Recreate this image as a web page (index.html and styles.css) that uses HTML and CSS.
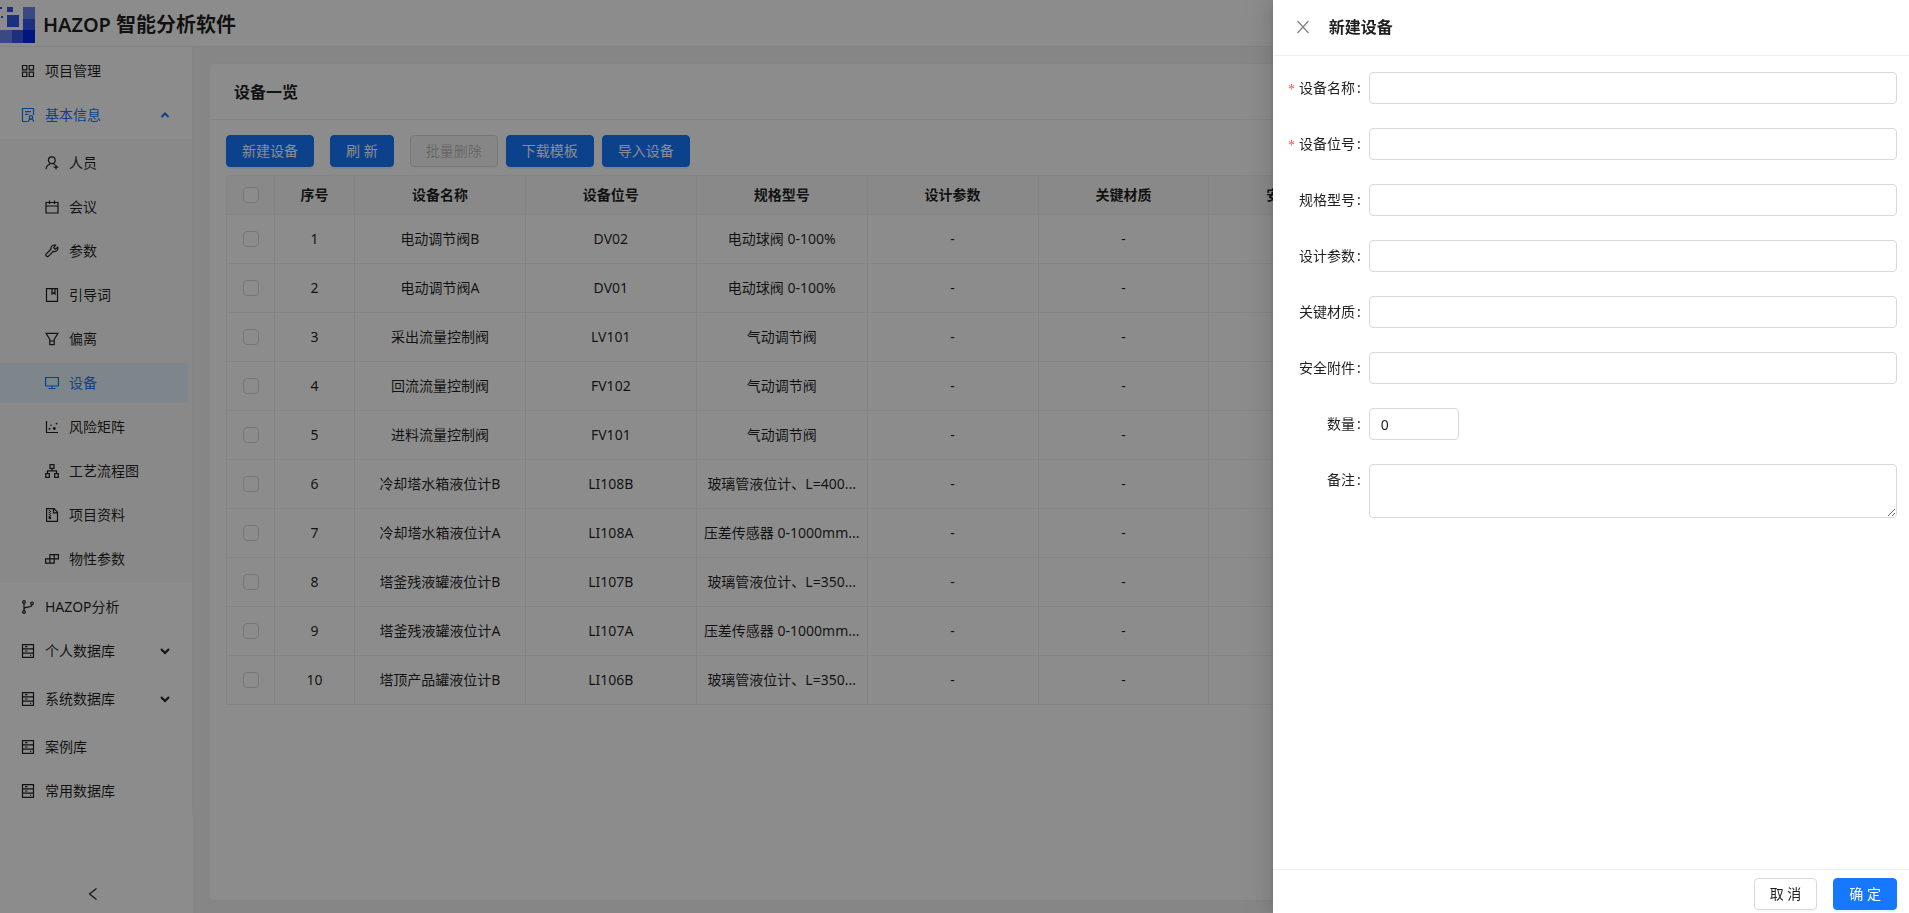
FILE: index.html
```html
<!DOCTYPE html>
<html lang="zh-CN">
<head>
    <meta charset="UTF-8">
    <title>HAZOP 智能分析软件</title>
    <link rel="stylesheet" href="styles.css">
</head>
<body>
    <!-- icon sprite -->
    <svg class="sprite" xmlns="http://www.w3.org/2000/svg">
        <symbol id="i-app" viewBox="0 0 14 14"><path d="M1.500 1.500h4.300v4.300h-4.300zM8.200 1.500h4.300v4.300h-4.300zM1.500 8.200h4.300v4.300h-4.300zM8.200 8.200h4.300v4.300h-4.300z"/></symbol>
        <symbol id="i-audit" viewBox="0 0 14 14"><path d="M6.500 13.500h-5v-13h11v6.500M4 3.700h6M4 6.300h3.500"/><circle cx="10" cy="9.300" r="1.700"/><path d="M7.400 13.800c.2-1.800 1.200-2.800 2.600-2.800s2.400 1 2.600 2.800"/></symbol>
        <symbol id="i-user" viewBox="0 0 14 14"><circle cx="6.800" cy="4.200" r="3.400"/><path d="M1 13.300c.2-2.600 1.800-4.600 4.200-5.300M8.300 8c.8.2 1.400.5 2 1M8.700 11.200h4.600M11 9v4.500"/></symbol>
        <symbol id="i-cal" viewBox="0 0 14 14"><path d="M1 2.500h12v10.500h-12zM1 6h12M4.500.5v3.500M9.500.5v3.500"/></symbol>
        <symbol id="i-tool" viewBox="0 0 14 14"><path d="M12.700 3.300l-2.500 2-1.500-1.500 1.900-2.600c-2.700-.8-5.200 1.200-4.600 4l-5 5c-.8.9.9 3 2.200 2.200l5-5c2.900.7 5.400-1.500 4.500-4.100z"/></symbol>
        <symbol id="i-book" viewBox="0 0 14 14"><path d="M1.500.7h11v12.600h-11zM7 .7v5.300l1.500-1.300 1.500 1.300v-5.300"/></symbol>
        <symbol id="i-filter" viewBox="0 0 14 14"><path d="M1 1.300h12l-3.800 6.200v5.200h-4.400v-5.200zM4.800 9h4.400"/></symbol>
        <symbol id="i-desktop" viewBox="0 0 14 14"><path d="M.6 1.500h12.800v8.500h-12.800zM7 10v2.500M3.500 12.500h7"/></symbol>
        <symbol id="i-dot" viewBox="0 0 14 14"><path d="M1.500 1v11.500h11.500"/><g class="solid"><circle cx="4.500" cy="8.700" r="1"/><circle cx="6" cy="5.300" r=".8"/><circle cx="9.300" cy="8.500" r="1.400"/><circle cx="11.600" cy="3.600" r=".9"/></g></symbol>
        <symbol id="i-tree" viewBox="0 0 14 14"><path d="M5 .7h4v3.600h-4zM.7 9.600h3.600v3.700h-3.600zM9.700 9.600h3.600v3.700h-3.600zM7 4.300v2.500M2.500 9.600v-2.800h9v2.800"/></symbol>
        <symbol id="i-zip" viewBox="0 0 14 14"><path d="M1.600.7h7.400l3.500 3.500v9.100h-10.900zM8.500.8v4h4"/><path stroke-dasharray="1 1" d="M4.300 2v7M5.500 3v6"/><path d="M4.300 9.300h1.200v1.200h-1.200z"/></symbol>
        <symbol id="i-blocks" viewBox="0 0 14 14"><path d="M4.900 2.700h8.500v4.200h-8.500zM.6 6.900h8.600v4.300h-8.600zM9.200 2.700v8.500M4.900 6.900v4.300"/></symbol>
        <symbol id="i-branch" viewBox="0 0 14 14"><circle cx="3" cy="2" r="1.300"/><circle cx="3" cy="12" r="1.300"/><circle cx="11" cy="3.300" r="1.300"/><path d="M3 3.300v7.400M3 9.200c0-1.600 1-2 4-2.100s4-.8 4-2.500"/></symbol>
        <symbol id="i-db" viewBox="0 0 14 14"><path d="M1.500.6h11v12.800h-11zM1.500 4.800h11M1.500 9.200h11M4 2.700h2.500M4 7h2.500M9 11.300h1.200"/></symbol>
        <symbol id="i-down" viewBox="0 0 10 10"><path d="M1 3l4 4 4-4"/></symbol>
        <symbol id="i-up" viewBox="0 0 10 10"><path d="M1.500 7l3.500-3.500 3.500 3.500"/></symbol>
        <symbol id="i-left" viewBox="0 0 14 14"><path d="M10.500 1.500l-7 5.500 7 5.500"/></symbol>
        <symbol id="i-close" viewBox="0 0 14 14"><path d="M1.500 1l11 12M12.500 1l-11 12"/></symbol>
    </svg>

    <div class="layout">
        <header class="header">
            <svg class="logo" viewBox="0 0 35 36">
                <path fill="#3558d8" d="M0 0h2v2h-2zM1 9h2v2h-2z"/>
                <path fill="#3558e8" d="M7 0h6v5h-6zM7 8h12v12h-12zM12 23h11v13h-11zM23 12h12v12h-12z"/>
                <path fill="#6a86f0" d="M23 0h12v12h-12zM0 23h12v13h-12z"/>
                <path fill="#0028e8" d="M23 23h12v13h-12z"/>
            </svg>
            <h1>HAZOP 智能分析软件</h1>
        </header>

        <div class="body">
            <aside class="sider">
                <nav class="menu">
                    <a class="item" href="#"><svg class="icon"><use href="#i-app"/></svg>项目管理</a>
                    <button class="item open" type="button"><svg class="icon"><use href="#i-audit"/></svg>基本信息<svg class="arrow"><use href="#i-up"/></svg></button>
                    <div class="submenu">
                        <a class="item" href="#"><svg class="icon"><use href="#i-user"/></svg>人员</a>
                        <a class="item" href="#"><svg class="icon"><use href="#i-cal"/></svg>会议</a>
                        <a class="item" href="#"><svg class="icon"><use href="#i-tool"/></svg>参数</a>
                        <a class="item" href="#"><svg class="icon"><use href="#i-book"/></svg>引导词</a>
                        <a class="item" href="#"><svg class="icon"><use href="#i-filter"/></svg>偏离</a>
                        <a class="item selected" href="#"><svg class="icon"><use href="#i-desktop"/></svg>设备</a>
                        <a class="item" href="#"><svg class="icon"><use href="#i-dot"/></svg>风险矩阵</a>
                        <a class="item" href="#"><svg class="icon"><use href="#i-tree"/></svg>工艺流程图</a>
                        <a class="item" href="#"><svg class="icon"><use href="#i-zip"/></svg>项目资料</a>
                        <a class="item" href="#"><svg class="icon"><use href="#i-blocks"/></svg>物性参数</a>
                    </div>
                    <a class="item" href="#"><svg class="icon"><use href="#i-branch"/></svg>HAZOP分析</a>
                    <button class="item closed" type="button"><svg class="icon"><use href="#i-db"/></svg>个人数据库<svg class="arrow"><use href="#i-down"/></svg></button>
                    <button class="item closed" type="button"><svg class="icon"><use href="#i-db"/></svg>系统数据库<svg class="arrow"><use href="#i-down"/></svg></button>
                    <a class="item" href="#"><svg class="icon"><use href="#i-db"/></svg>案例库</a>
                    <a class="item" href="#"><svg class="icon"><use href="#i-db"/></svg>常用数据库</a>
                </nav>
                <button class="collapse" type="button" aria-label="收起菜单"><svg class="icon"><use href="#i-left"/></svg></button>
            </aside>

            <main class="main">
                <section class="card">
                    <h2 class="card-title">设备一览</h2>
                    <div class="card-body">
                        <div class="toolbar">
                            <button class="btn primary spaced" type="button">新建设备</button>
                            <button class="btn primary spaced" type="button">刷 新</button>
                            <button class="btn" type="button" disabled>批量删除</button>
                            <button class="btn primary" type="button">下载模板</button>
                            <button class="btn primary" type="button">导入设备</button>
                        </div>
                        <table class="table">
                            <colgroup>
                                <col class="col-check"><col class="col-no">
                                <col><col><col><col><col><col><col><col>
                                <col class="col-action">
                            </colgroup>
                            <thead>
                                <tr><th><input type="checkbox" aria-label="全选"></th><th>序号</th><th>设备名称</th><th>设备位号</th><th>规格型号</th><th>设计参数</th><th>关键材质</th><th>安全附件</th><th>数量</th><th>备注</th><th>操作</th></tr>
                            </thead>
                            <tbody>
                                <tr><td><input type="checkbox" aria-label="选择 1"></td><td>1</td><td>电动调节阀B</td><td>DV02</td><td>电动球阀 0-100%</td><td>-</td><td>-</td><td>-</td><td>-</td><td>-</td><td>-</td></tr>
                                <tr><td><input type="checkbox" aria-label="选择 2"></td><td>2</td><td>电动调节阀A</td><td>DV01</td><td>电动球阀 0-100%</td><td>-</td><td>-</td><td>-</td><td>-</td><td>-</td><td>-</td></tr>
                                <tr><td><input type="checkbox" aria-label="选择 3"></td><td>3</td><td>采出流量控制阀</td><td>LV101</td><td>气动调节阀</td><td>-</td><td>-</td><td>-</td><td>-</td><td>-</td><td>-</td></tr>
                                <tr><td><input type="checkbox" aria-label="选择 4"></td><td>4</td><td>回流流量控制阀</td><td>FV102</td><td>气动调节阀</td><td>-</td><td>-</td><td>-</td><td>-</td><td>-</td><td>-</td></tr>
                                <tr><td><input type="checkbox" aria-label="选择 5"></td><td>5</td><td>进料流量控制阀</td><td>FV101</td><td>气动调节阀</td><td>-</td><td>-</td><td>-</td><td>-</td><td>-</td><td>-</td></tr>
                                <tr><td><input type="checkbox" aria-label="选择 6"></td><td>6</td><td>冷却塔水箱液位计B</td><td>LI108B</td><td>玻璃管液位计、L=400...</td><td>-</td><td>-</td><td>-</td><td>-</td><td>-</td><td>-</td></tr>
                                <tr><td><input type="checkbox" aria-label="选择 7"></td><td>7</td><td>冷却塔水箱液位计A</td><td>LI108A</td><td>压差传感器 0-1000mm...</td><td>-</td><td>-</td><td>-</td><td>-</td><td>-</td><td>-</td></tr>
                                <tr><td><input type="checkbox" aria-label="选择 8"></td><td>8</td><td>塔釜残液罐液位计B</td><td>LI107B</td><td>玻璃管液位计、L=350...</td><td>-</td><td>-</td><td>-</td><td>-</td><td>-</td><td>-</td></tr>
                                <tr><td><input type="checkbox" aria-label="选择 9"></td><td>9</td><td>塔釜残液罐液位计A</td><td>LI107A</td><td>压差传感器 0-1000mm...</td><td>-</td><td>-</td><td>-</td><td>-</td><td>-</td><td>-</td></tr>
                                <tr><td><input type="checkbox" aria-label="选择 10"></td><td>10</td><td>塔顶产品罐液位计B</td><td>LI106B</td><td>玻璃管液位计、L=350...</td><td>-</td><td>-</td><td>-</td><td>-</td><td>-</td><td>-</td></tr>
                            </tbody>
                        </table>
                    </div>
                </section>
            </main>
        </div>
    </div>

    <div class="mask"></div>
    <form class="drawer">
        <div class="drawer-header">
            <button class="close" type="button" aria-label="关闭"><svg class="icon"><use href="#i-close"/></svg></button>
            <h2>新建设备</h2>
        </div>
        <div class="drawer-body">
            <div class="field"><label class="required" for="name">设备名称</label><input id="name" type="text"></div>
            <div class="field"><label class="required" for="tag">设备位号</label><input id="tag" type="text"></div>
            <div class="field"><label for="spec">规格型号</label><input id="spec" type="text"></div>
            <div class="field"><label for="design">设计参数</label><input id="design" type="text"></div>
            <div class="field"><label for="material">关键材质</label><input id="material" type="text"></div>
            <div class="field"><label for="safety">安全附件</label><input id="safety" type="text"></div>
            <div class="field"><label for="count">数量</label><input class="short" id="count" type="text" inputmode="numeric" value="0"></div>
            <div class="field"><label for="remark">备注</label><textarea id="remark" rows="2"></textarea></div>
        </div>
        <div class="drawer-footer">
            <button class="btn" type="button">取 消</button>
            <button class="btn primary" type="submit">确 定</button>
        </div>
    </form>
</body>
</html>
```
FILE: styles.css
```css
* {
    box-sizing: border-box;
}
body {
    margin: 0;
    font-family: "Noto Sans", "Noto Sans CJK SC", sans-serif;
    font-size: 14px;
    line-height: 22px;
    color: rgba(0, 0, 0, 0.88);
    background-color: #f5f5f5;
    overflow: hidden;
}
button, input, textarea {
    font: inherit;
    color: inherit;
}
h1, h2 {
    margin: 0;
    font-weight: 600;
}
.sprite {
    display: none;
}
.icon {
    width: 14px;
    height: 14px;
    flex: none;
    fill: none;
    stroke: currentColor;
    stroke-width: 1.2;
}
.solid {
    fill: currentColor;
    stroke: none;
}
.layout {
    display: flex;
    flex-direction: column;
    height: 100vh;
}
.header {
    display: flex;
    align-items: center;
    gap: 8px;
    height: 47px;
    padding-top: 4px;
    background-color: white;
    border-bottom: 1px solid #eee;
}
.logo {
    width: 35px;
    height: 36px;
}
.header h1 {
    font-size: 20px;
    line-height: 28px;
}
.body {
    display: flex;
    flex: 1;
    min-height: 0;
}

/* sidebar */
.sider {
    display: flex;
    flex-direction: column;
    justify-content: space-between;
    width: 193px;
    flex: none;
    background-color: white;
}
.menu {
    display: flex;
    flex-direction: column;
    gap: 4px;
    padding: 4px 0;
    border-right: 1px solid #f0f0f0;
}
.item {
    display: flex;
    align-items: center;
    gap: 10px;
    width: 188px;
    height: 40px;
    padding: 0 18px 0 21px;
    border: none;
    background: none;
    color: inherit;
    text-decoration: none;
    cursor: pointer;
}
.open {
    color: #1677ff;
}
.closed {
    margin-bottom: 4px;
}
.arrow {
    width: 10px;
    height: 10px;
    margin-left: auto;
    fill: none;
    stroke: currentColor;
    stroke-width: 2;
}
.submenu {
    display: flex;
    flex-direction: column;
    gap: 4px;
    padding: 4px 0;
    background-color: #fafafa;
}
.submenu .item {
    padding-left: 45px;
    border-radius: 0 4px 4px 0;
}
.submenu .selected {
    color: #1677ff;
    background-color: #e6f4ff;
}
.collapse {
    display: flex;
    align-items: center;
    justify-content: center;
    height: 38px;
    padding: 0 8px 0 0;
    border: none;
    background: none;
    cursor: pointer;
}

/* content */
.main {
    flex: 1;
    min-width: 0;
    padding: 16px 16px 12px;
}
.card {
    height: 100%;
    background-color: white;
    border: 1px solid #f0f0f0;
    border-radius: 4px;
}
.card-title {
    height: 56px;
    padding: 0 24px;
    font-size: 16px;
    line-height: 56px;
    border-bottom: 1px solid #f0f0f0;
}
.card-body {
    padding: 15px 16px;
}
.toolbar {
    display: flex;
    gap: 8px;
    margin-bottom: 8px;
}
.spaced {
    margin-right: 8px;
}
.btn {
    height: 32px;
    padding: 0 15px;
    background-color: white;
    border: 1px solid #d9d9d9;
    border-radius: 4px;
    box-shadow: 0 2px 0 rgba(0, 0, 0, 0.02);
    cursor: pointer;
}
.btn.primary {
    color: white;
    background-color: #1677ff;
    border-color: #1677ff;
    box-shadow: 0 2px 0 rgba(5, 145, 255, 0.1);
}
.btn:disabled {
    color: rgba(0, 0, 0, 0.25);
    background-color: #f5f5f5;
    cursor: not-allowed;
}
.table {
    width: 100%;
    table-layout: fixed;
    border-collapse: separate;
    border-spacing: 0;
    border: 1px solid #f0f0f0;
    border-width: 1px 0 0 1px;
    border-radius: 4px 0 0 0;
    text-align: center;
}
.col-check {
    width: 48px;
}
.col-no {
    width: 80px;
}
.col-action {
    width: 154px;
}
.table th, .table td {
    height: 49px;
    padding: 0 6px;
    border: 1px solid #f0f0f0;
    border-width: 0 1px 1px 0;
    white-space: nowrap;
    overflow: hidden;
    text-overflow: ellipsis;
}
.table th {
    height: 39px;
    font-weight: 600;
    background-color: #fafafa;
}
.table input {
    display: block;
    appearance: none;
    width: 16px;
    height: 16px;
    margin: 0 auto;
    background-color: white;
    border: 1px solid #d9d9d9;
    border-radius: 4px;
}

/* drawer */
.mask {
    position: fixed;
    inset: 0;
    background-color: rgba(0, 0, 0, 0.45);
}
.drawer {
    position: fixed;
    top: 0;
    right: 0;
    bottom: 0;
    display: flex;
    flex-direction: column;
    width: calc(100% / 3);
    background-color: white;
    box-shadow: -6px 0 16px 0 rgba(0, 0, 0, 0.08), -3px 0 6px -4px rgba(0, 0, 0, 0.12), -9px 0 28px 8px rgba(0, 0, 0, 0.05);
}
.drawer-header {
    display: flex;
    align-items: center;
    gap: 19px;
    height: 56px;
    padding: 0 23px 2px;
    border-bottom: 1px solid #f0f0f0;
}
.drawer-header h2 {
    font-size: 16px;
    line-height: 24px;
}
.close {
    display: flex;
    padding: 0;
    border: none;
    background: none;
    color: rgba(0, 0, 0, 0.5);
    cursor: pointer;
}
.drawer-body {
    display: flex;
    flex: 1;
    flex-direction: column;
    gap: 24px;
    padding: 16px 12px;
    overflow: auto;
}
.field {
    display: flex;
    align-items: flex-start;
}
.field label {
    display: flex;
    flex: none;
    align-items: center;
    justify-content: flex-end;
    width: 84px;
    height: 32px;
    white-space: nowrap;
}
.field label::after {
    content: ":";
    margin: 0 8px 0 2px;
}
.required::before {
    content: "*";
    margin: 4px 4px 0 0;
    color: #ff4d4f;
    font-family: "Liberation Serif", serif;
}
.field input, .field textarea {
    flex: 1;
    min-width: 0;
    height: 32px;
    padding: 4px 11px;
    background-color: white;
    border: 1px solid #d9d9d9;
    border-radius: 4px;
}
.field textarea {
    height: 54px;
    resize: vertical;
}
.field .short {
    flex: none;
    width: 90px;
}
.drawer-footer {
    display: flex;
    justify-content: flex-end;
    gap: 16px;
    padding: 8px 12px 3px;
    border-top: 1px solid #f0f0f0;
}
```
